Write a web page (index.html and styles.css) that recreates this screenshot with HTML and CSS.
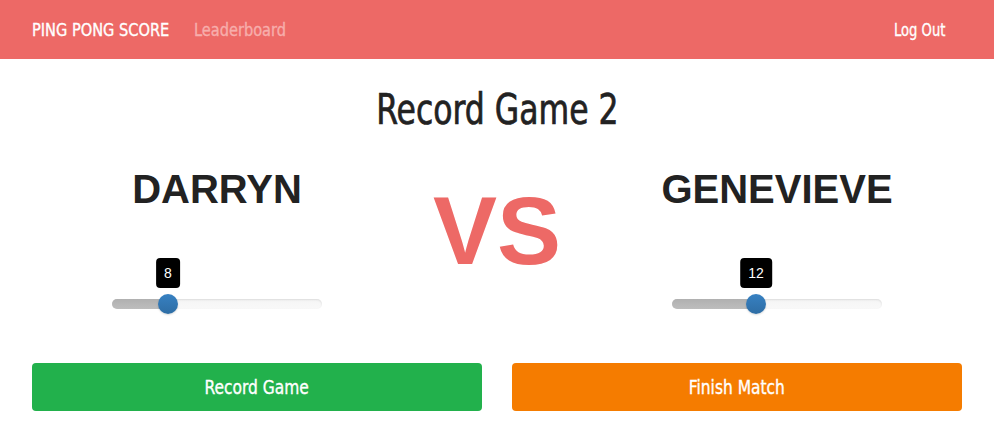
FILE: index.html
```html
<!DOCTYPE html>
<html>
<head>
<meta charset="utf-8">
<link rel="stylesheet" href="styles.css">
</head>
<body>
<nav class="navbar">
  <div class="nav-left">
    <a class="brand"><span class="narrow narrow-left">PING PONG SCORE</span></a>
    <a class="nav-link"><span class="narrow narrow-left">Leaderboard</span></a>
  </div>
  <a class="nav-right"><span class="narrow narrow-right">Log Out</span></a>
</nav>
<main class="container">
  <h1 class="title"><span class="narrow">Record Game 2</span></h1>
  <div class="versus">
    <div class="player">
      <h2 class="name">DARRYN</h2>
      <div class="slider">
        <div class="tooltip" style="left: 26.67%">8</div>
        <div class="track">
          <div class="fill" style="width: 26.67%"></div>
          <div class="thumb" style="left: 26.67%"></div>
        </div>
      </div>
    </div>
    <div class="vs">VS</div>
    <div class="player">
      <h2 class="name">GENEVIEVE</h2>
      <div class="slider">
        <div class="tooltip" style="left: 40%">12</div>
        <div class="track">
          <div class="fill" style="width: 40%"></div>
          <div class="thumb" style="left: 40%"></div>
        </div>
      </div>
    </div>
  </div>
  <div class="actions">
    <button class="btn btn-green"><span class="narrow">Record Game</span></button>
    <button class="btn btn-orange"><span class="narrow">Finish Match</span></button>
  </div>
</main>
</body>
</html>
```

FILE: styles.css
```css
* { box-sizing: border-box; }
body {
  margin: 0;
  background: #fff;
  font-family: "DejaVu Sans Condensed", "DejaVu Sans", sans-serif;
  color: #222;
}
.narrow {
  display: inline-block;
  transform: scaleX(0.86);
  transform-origin: center;
  -webkit-text-stroke: 0.35px currentColor;
}
.narrow-left { transform-origin: left center; }
.narrow-right { transform-origin: right center; }
.navbar {
  height: 59px;
  background: #ed6966;
  display: flex;
  align-items: center;
  justify-content: space-between;
  padding: 0 49px 0 32px;
}
.nav-left { display: flex; align-items: center; gap: 10px; }
.brand, .nav-link, .nav-right { font-size: 18px; }
.brand .narrow, .nav-link .narrow { transform: scaleX(0.9); }
.nav-right .narrow { transform: scaleX(0.81); }
.brand { color: #fff; }
.nav-link { color: #f7aeac; }
.nav-right { color: #fff; }
.container {
  width: 960px;
  margin: 0 auto;
}
.title {
  margin: 28px 0 0;
  text-align: center;
  font-weight: normal;
  font-size: 42px;
  line-height: 46px;
  color: #222;
}
.title .narrow { transform: scaleX(0.833); -webkit-text-stroke: 0.7px currentColor; }
.versus {
  display: grid;
  grid-template-columns: 400px 160px 400px;
  margin-top: 33px;
}
.player { display: flex; flex-direction: column; align-items: center; }
.name {
  margin: 0;
  font-family: "Liberation Sans", Arial, sans-serif;
  font-weight: bold;
  font-size: 40px;
  line-height: 46px;
  color: #222;
}
.slider {
  position: relative;
  width: 210px;
  margin-top: 87px;
}
.tooltip {
  position: absolute;
  bottom: 21px;
  transform: translateX(-50%);
  background: #000;
  color: #fff;
  font-family: "Liberation Sans", Arial, sans-serif;
  font-size: 14px;
  line-height: 30px;
  padding: 0 8px;
  border-radius: 4px;
  text-align: center;
}
.track {
  position: relative;
  height: 10px;
  border-radius: 5px;
  background: linear-gradient(#f5f5f5, #f9f9f9);
  box-shadow: inset 0 1px 2px rgba(0,0,0,0.1);
}
.fill {
  height: 100%;
  border-radius: 5px 0 0 5px;
  background: linear-gradient(#b0b0b0, #bdbdbd);
}
.thumb {
  position: absolute;
  top: 50%;
  width: 20px;
  height: 20px;
  margin: -10px 0 0 -10px;
  border-radius: 50%;
  background: linear-gradient(#3781c2, #2e6da4);
  box-shadow: 0 1px 2px rgba(0,0,0,0.15);
}
.vs {
  text-align: center;
  font-family: "Liberation Sans", Arial, sans-serif;
  font-weight: bold;
  font-size: 96px;
  line-height: 110px;
  color: #ed6966;
  margin-top: 10px;
}
.actions {
  display: grid;
  grid-template-columns: 1fr 1fr;
  gap: 30px;
  padding: 0 15px;
  margin-top: 54px;
}
.btn {
  height: 48px;
  border: 0;
  border-radius: 4px;
  color: #fff;
  font-family: "DejaVu Sans Condensed", "DejaVu Sans", sans-serif;
  font-size: 20px;
}
.btn-green { background: #22b14c; }
.btn-orange { background: #f57c00; }
```
